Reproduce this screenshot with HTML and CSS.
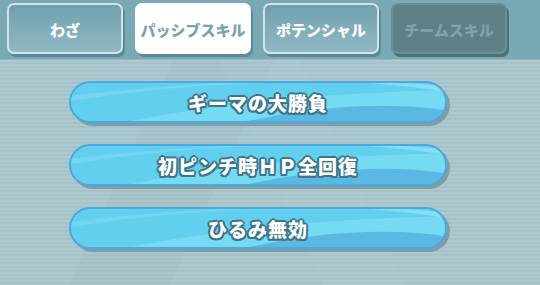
FILE: index.html
```html
<!DOCTYPE html>
<html lang="ja">
<head>
  <meta charset="UTF-8" />
  <meta name="viewport" content="width=device-width, initial-scale=1.0" />
  <title>パッシブスキル</title>
  <link rel="stylesheet" href="styles.css">
</head>
<body>
  <header class="tab-bar">
    <button class="tab">わざ</button>
    <button class="tab tab-active">パッシブスキル</button>
    <button class="tab">ポテンシャル</button>
    <button class="tab tab-disabled">チームスキル</button>
  </header>

  <main class="skill-list">
    <div class="skill">
      <svg class="skill-wave" viewBox="0 0 378 42" preserveAspectRatio="none">
        <path d="M0 20 Q90 4 190 0 L150 0 Q60 6 0 14 Z" fill="#86e0f4" opacity="0.5"/>
        <path d="M60 42 Q200 12 378 8 L378 30 Q300 18 180 42 Z" fill="#76dbf2"/>
        <path d="M180 42 Q290 16 378 30 L378 42 Z" fill="#5bb8e3"/>
        <path d="M300 0 Q350 4 378 10 L378 4 Q350 0 330 0 Z" fill="#84dff3"/>
      </svg>
      <span class="skill-name">ギーマの大勝負</span>
    </div>
    <div class="skill">
      <svg class="skill-wave" viewBox="0 0 378 42" preserveAspectRatio="none">
        <path d="M0 20 Q90 4 190 0 L150 0 Q60 6 0 14 Z" fill="#86e0f4" opacity="0.5"/>
        <path d="M60 42 Q200 12 378 8 L378 30 Q300 18 180 42 Z" fill="#76dbf2"/>
        <path d="M180 42 Q290 16 378 30 L378 42 Z" fill="#5bb8e3"/>
        <path d="M300 0 Q350 4 378 10 L378 4 Q350 0 330 0 Z" fill="#84dff3"/>
      </svg>
      <span class="skill-name">初ピンチ時ＨＰ全回復</span>
    </div>
    <div class="skill">
      <svg class="skill-wave" viewBox="0 0 378 42" preserveAspectRatio="none">
        <path d="M0 20 Q90 4 190 0 L150 0 Q60 6 0 14 Z" fill="#86e0f4" opacity="0.5"/>
        <path d="M60 42 Q200 12 378 8 L378 30 Q300 18 180 42 Z" fill="#76dbf2"/>
        <path d="M180 42 Q290 16 378 30 L378 42 Z" fill="#5bb8e3"/>
        <path d="M300 0 Q350 4 378 10 L378 4 Q350 0 330 0 Z" fill="#84dff3"/>
      </svg>
      <span class="skill-name">ひるみ無効</span>
    </div>
  </main>
</body>
</html>
```

FILE: styles.css
```css
/* Página */
body {
  margin: 0;
  width: 540px;
  height: 285px;
  overflow: hidden;
  font-family: "Noto Sans CJK JP", "Noto Sans", sans-serif;
  background-color: #a9c6cc;
  background-image:
    repeating-linear-gradient(to bottom, rgba(255,255,255,0.05) 0 2px, rgba(0,0,0,0.015) 2px 4px),
    linear-gradient(65deg, transparent 48%, rgba(255,255,255,0.04) 48% 60%, transparent 60%),
    linear-gradient(115deg, transparent 30%, rgba(0,0,0,0.02) 30% 45%, transparent 45%);
}

/* Abas */
.tab-bar {
  display: flex;
  gap: 12px;
  height: 60px;
  padding: 3px 7px 0;
  box-sizing: border-box;
  background-color: #7aa9b6;
  border-bottom: 1px solid #93bcc5;
}

.tab {
  width: 116px;
  height: 51px;
  border: 2px solid #cfe3e8;
  border-radius: 7px;
  background: linear-gradient(to bottom, #70a1ae, #8fb9c3);
  box-shadow: 2px 3px 0 #5a8b98;
  color: white;
  font-family: inherit;
  font-size: 15px;
  font-weight: 900;
  padding: 2px 0 0;
  cursor: pointer;
}

.tab-active {
  background: white;
  border-color: white;
  color: #7aa3af;
}

.tab-disabled {
  background: #5e8188;
  border-color: #6a8e95;
  color: #80a2a8;
  box-shadow: 2px 3px 0 #4d7079;
}

/* Lista de habilidades */
.skill-list {
  display: flex;
  flex-direction: column;
  gap: 21px;
  padding: 21px 0 0 69px;
}

.skill {
  position: relative;
  width: 378px;
  height: 42px;
  border: 2px solid #4aa9e2;
  border-radius: 22px;
  background-color: #62cfee;
  box-shadow: 3px 3px 0 #7e9ea6;
  box-sizing: border-box;
  overflow: hidden;
  display: flex;
  align-items: center;
  justify-content: center;
}

.skill-wave {
  position: absolute;
  inset: 0;
  width: 100%;
  height: 100%;
}

.skill-name {
  position: relative;
  color: white;
  font-size: 19px;
  font-weight: 900;
  letter-spacing: 1px;
  text-shadow:
    -2px 0 #3d7689, 2px 0 #3d7689, 0 -2px #3d7689, 0 2px #3d7689,
    -1.5px -1.5px #3d7689, 1.5px -1.5px #3d7689, -1.5px 1.5px #3d7689, 1.5px 1.5px #3d7689;
}
```
